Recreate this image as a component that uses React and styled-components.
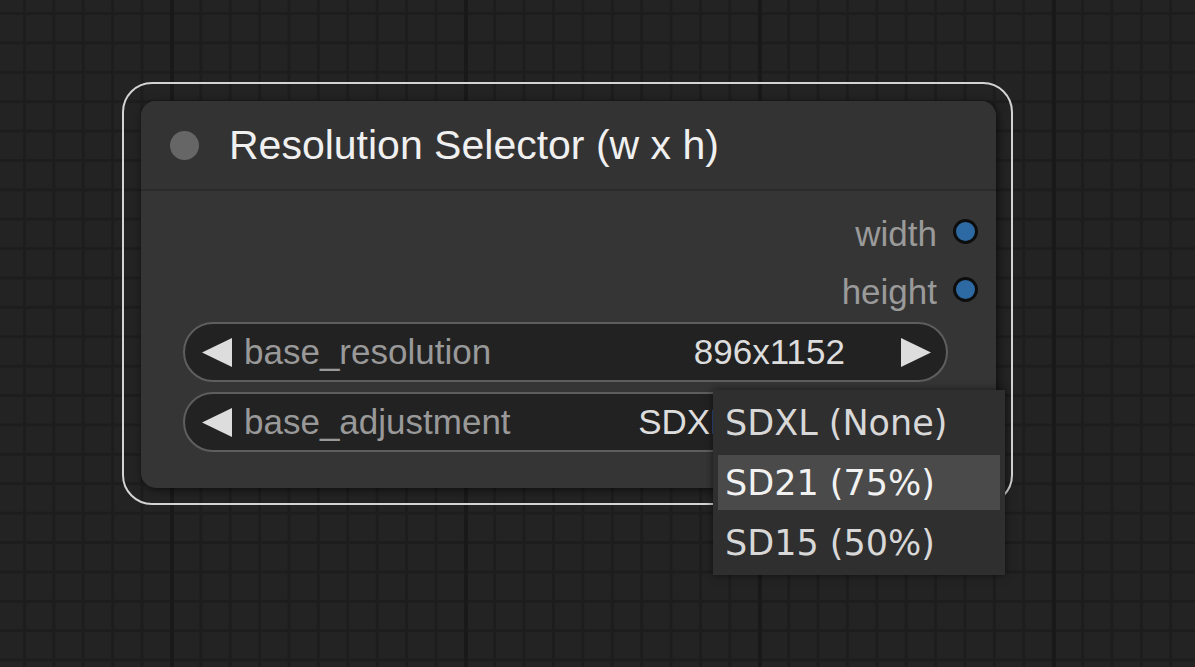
import React from 'react';
import styled, { createGlobalStyle } from 'styled-components';

const GlobalStyle = createGlobalStyle`
  html, body {
    margin: 0;
    padding: 0;
    background: #232323;
  }
  body {
    font-family: "Liberation Sans", Arial, sans-serif;
  }
`;

const Canvas = styled.div`
  position: relative;
  width: 1195px;
  height: 667px;
  overflow: hidden;
  background-color: #232323;
  background-image:
    linear-gradient(90deg, #191919 0 4px, transparent 4px),
    linear-gradient(90deg, #1d1d1d 0 3px, transparent 3px),
    linear-gradient(180deg, #1d1d1d 0 3px, transparent 3px);
  background-size: 294px 100%, 29.4px 100%, 100% 29.4px;
  background-position: 170px 0, 23px 0, 0 12px;
`;

const Selection = styled.div`
  position: absolute;
  left: 122px;
  top: 82px;
  width: 891px;
  height: 423px;
  box-sizing: border-box;
  border: 2px solid #d4d4d4;
  border-radius: 30px;
  padding: 17px 15px 15px 17px;
`;

const Node = styled.div`
  height: 100%;
  border-radius: 15px;
  background: #353535;
  box-shadow: 2px 2px 9px rgba(0, 0, 0, 0.6);
  display: flex;
  flex-direction: column;
  overflow: hidden;
`;

const TitleBar = styled.div`
  height: 88px;
  flex: none;
  display: flex;
  align-items: center;
  padding-left: 29px;
  background: #333333;
  border-bottom: 2px solid #2a2a2a;
`;

const TitleDot = styled.span`
  width: 29px;
  height: 29px;
  border-radius: 50%;
  background: #666666;
  margin-right: 30px;
`;

const Title = styled.span`
  font-size: 41px;
  color: #f0f0f0;
  white-space: nowrap;
`;

const Body = styled.div`
  flex: 1;
  display: flex;
  flex-direction: column;
  padding-top: 11px;
`;

const OutputRow = styled.div`
  height: 58px;
  display: flex;
  align-items: center;
  justify-content: flex-end;
  padding-right: 18px;
`;

const SlotLabel = styled.span`
  font-size: 35px;
  color: #9a9a9a;
  margin-right: 16px;
  margin-top: 6px;
`;

const SlotDot = styled.span`
  width: 25px;
  height: 25px;
  box-sizing: border-box;
  border-radius: 50%;
  border: 3px solid #0d0d0d;
  background: #2d6aa3;
`;

const Widgets = styled.div`
  display: flex;
  flex-direction: column;
  gap: 10px;
  margin: 4px 48px 0 42px;
`;

const Widget = styled.div`
  height: 60px;
  box-sizing: border-box;
  border: 2px solid #5e5e5e;
  border-radius: 30px;
  background: #222222;
  display: flex;
  align-items: center;
  padding: 0 15px 0 17px;
  font-size: 35px;
  white-space: nowrap;
`;

const WidgetLabel = styled.span`
  flex: 1;
  color: #999999;
  margin-left: 12px;
`;

const WidgetValue = styled.span`
  color: #dddddd;
  margin-right: 56px;
`;

const Menu = styled.div`
  position: absolute;
  left: 713px;
  top: 390px;
  width: 292px;
  box-sizing: border-box;
  padding: 5px;
  background: #2f2f2f;
  box-shadow: 0 0 8px rgba(0, 0, 0, 0.55);
  display: flex;
  flex-direction: column;
  gap: 5px;
`;

const MenuItem = styled.div`
  height: 55px;
  display: flex;
  align-items: center;
  padding-left: 7px;
  font-family: "DejaVu Sans", sans-serif;
  font-size: 35px;
  color: ${p => (p.active ? '#f2f2f2' : '#d8d8d8')};
  background: ${p => (p.active ? '#4a4a4a' : 'transparent')};
  white-space: nowrap;
`;

const Arrow = ({ dir }) => (
  <svg width="30" height="29" viewBox="0 0 30 29">
    <polygon
      points={dir === 'left' ? '30,0 0,14.5 30,29' : '0,0 30,14.5 0,29'}
      fill="#dddddd"
    />
  </svg>
);

const outputs = ['width', 'height'];

const widgets = [
  { name: 'base_resolution', value: '896x1152' },
  { name: 'base_adjustment', value: 'SDXL (None)' },
];

const options = ['SDXL (None)', 'SD21 (75%)', 'SD15 (50%)'];

export default function App() {
  return (
    <>
      <GlobalStyle />
      <Canvas>
        <Selection>
          <Node>
            <TitleBar>
              <TitleDot />
              <Title>Resolution Selector (w x h)</Title>
            </TitleBar>
            <Body>
              {outputs.map(out => (
                <OutputRow key={out}>
                  <SlotLabel>{out}</SlotLabel>
                  <SlotDot />
                </OutputRow>
              ))}
              <Widgets>
                {widgets.map(w => (
                  <Widget key={w.name}>
                    <Arrow dir="left" />
                    <WidgetLabel>{w.name}</WidgetLabel>
                    <WidgetValue>{w.value}</WidgetValue>
                    <Arrow dir="right" />
                  </Widget>
                ))}
              </Widgets>
            </Body>
          </Node>
        </Selection>
        <Menu>
          {options.map(opt => (
            <MenuItem key={opt} active={opt === 'SD21 (75%)'}>
              {opt}
            </MenuItem>
          ))}
        </Menu>
      </Canvas>
    </>
  );
}
